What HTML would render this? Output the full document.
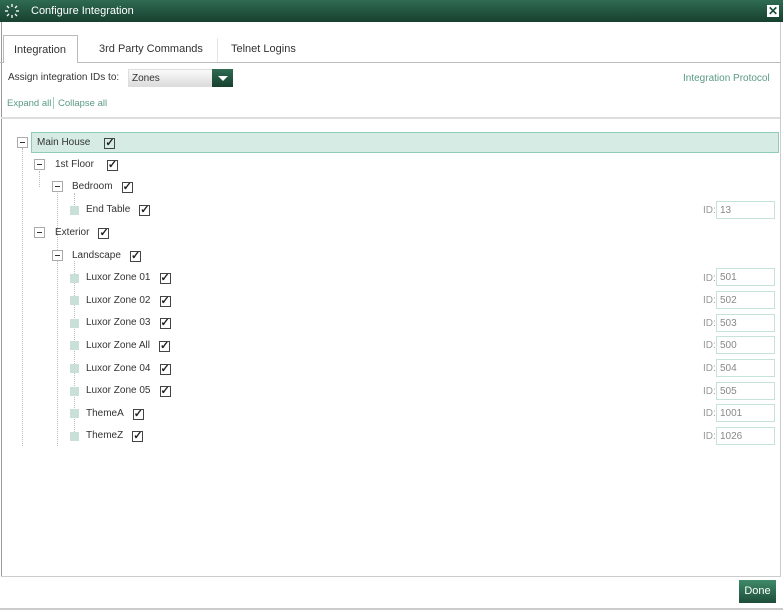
<!DOCTYPE html>
<html><head><style>
*{margin:0;padding:0;box-sizing:border-box}
body{width:783px;height:610px;background:#fff;font-family:"Liberation Sans",sans-serif;font-size:11px;color:#333;position:relative;overflow:hidden}
.a{position:absolute}
.title{left:0;top:0;width:783px;height:22px;background:linear-gradient(#2f6b52,#17402f);color:#fff;font-size:11px}
.exp{width:11px;height:11px;border:1px solid #aaa;background:#fff}
.exp:after{content:"";position:absolute;left:2px;top:4px;width:5px;height:1px;background:#333}
.leaf{width:9px;height:9px;background:#c8e0d8}
.cb{display:inline-block;vertical-align:-1px;margin-left:9px;width:11px;height:11px;border:1px solid #444;font-size:11px;line-height:9px;font-weight:bold;color:#222;text-align:center}
.lbl{font-size:10px;color:#333;white-space:nowrap}
.id{left:703px;font-size:10px;color:#999}
.in{left:716px;width:59px;height:18px;border:1px solid #c5e3d8;font-size:10px;color:#888;padding:3px 0 0 3px}
.dv{border-left:1px dotted #bbb;width:0}
</style></head><body>
<div class="a title">
<svg class="a" style="left:4px;top:3px" width="16" height="16" viewBox="0 0 16 16"><g stroke="#fff" stroke-width="1.3"><line x1="8" y1="1" x2="8" y2="4"/><line x1="8" y1="12" x2="8" y2="15"/><line x1="1" y1="8" x2="4" y2="8"/><line x1="12" y1="8" x2="15" y2="8"/><line x1="3" y1="3" x2="5" y2="5"/><line x1="11" y1="11" x2="13" y2="13"/><line x1="13" y1="3" x2="11" y2="5"/><line x1="3" y1="13" x2="5" y2="11"/></g></svg>
<span class="a" style="left:31px;top:5px">Configure Integration</span>
<div class="a" style="left:767px;top:5px;width:12px;height:12px;background:#fff;color:#1d4d3a;font-weight:bold;font-size:12px;line-height:12px;text-align:center">✕</div>
</div>
<div class="a" style="left:1px;top:22px;width:1px;height:555px;background:#999"></div>
<div class="a" style="left:780px;top:22px;width:1px;height:555px;background:#ccc"></div>
<div class="a" style="left:0;top:62px;width:781px;height:1px;background:#bbb"></div>
<div class="a" style="left:3px;top:35px;width:75px;height:28px;border:1px solid #bbb;border-bottom:none;background:#fff"></div>
<span class="a" style="left:14px;top:44px;font-size:11px">Integration</span>
<span class="a" style="left:99px;top:43px;font-size:11px">3rd Party Commands</span>
<div class="a" style="left:217px;top:38px;width:1px;height:24px;background:#e5e5e5"></div>
<span class="a" style="left:231px;top:43px;font-size:11px">Telnet Logins</span>
<span class="a" style="left:8px;top:72px;font-size:10px">Assign integration IDs to:</span>
<div class="a" style="left:128px;top:69px;width:105px;height:18px;background:linear-gradient(#fafafa,#dcdcdc);border:1px solid #ddd"></div>
<span class="a" style="left:132px;top:73px;font-size:10px">Zones</span>
<div class="a" style="left:212px;top:69px;width:21px;height:18px;background:linear-gradient(#2f6b52,#17402f)"></div>
<div class="a" style="left:218px;top:76px;width:0;height:0;border-left:5px solid transparent;border-right:5px solid transparent;border-top:5px solid #fff"></div>
<span class="a" style="left:683px;top:73px;font-size:10px;color:#5a9a82">Integration Protocol</span>
<span class="a" style="left:7px;top:98px;font-size:9.5px;color:#5a9a82">Expand all</span>
<div class="a" style="left:53px;top:97px;width:1px;height:12px;background:#9cc"></div>
<span class="a" style="left:58px;top:98px;font-size:9.5px;color:#5a9a82">Collapse all</span>
<div class="a" style="left:1px;top:117px;width:779px;height:2px;background:#ddd"></div>
<div class="a dv" style="left:22px;top:148px;height:298px"></div>
<div class="a dv" style="left:39px;top:171px;height:16px"></div>
<div class="a dv" style="left:57px;top:193px;height:253px"></div>
<div class="a dv" style="left:74px;top:193px;height:22px"></div>
<div class="a dv" style="left:74px;top:261px;height:175px"></div>
<div class="a" style="left:31px;top:132px;width:748px;height:21px;background:#d5ebe3;border:1px solid #8fcbb8"></div>
<div class="a exp" style="left:17px;top:137px"></div>
<span class="a lbl" style="left:37px;top:137px">Main House<span class="cb" style="margin-left:14px">✓</span></span>
<div class="a exp" style="left:34px;top:159px"></div>
<span class="a lbl" style="left:55px;top:159px">1st Floor<span class="cb" style="margin-left:13px">✓</span></span>
<div class="a exp" style="left:52px;top:181px"></div>
<span class="a lbl" style="left:72px;top:181px">Bedroom<span class="cb">✓</span></span>
<div class="a leaf" style="left:70px;top:206px"></div>
<span class="a lbl" style="left:86px;top:204px">End Table<span class="cb">✓</span></span>
<span class="a id" style="top:205px">ID:</span><div class="a in" style="top:201px">13</div>
<div class="a exp" style="left:34px;top:227px"></div>
<span class="a lbl" style="left:55px;top:227px">Exterior<span class="cb">✓</span></span>
<div class="a exp" style="left:52px;top:250px"></div>
<span class="a lbl" style="left:72px;top:250px">Landscape<span class="cb">✓</span></span>

<div class="a leaf" style="left:70px;top:274px"></div><span class="a lbl" style="left:86px;top:272px">Luxor Zone 01<span class="cb">✓</span></span><span class="a id" style="top:273px">ID:</span><div class="a in" style="top:268px">501</div>
<div class="a leaf" style="left:70px;top:296px"></div><span class="a lbl" style="left:86px;top:295px">Luxor Zone 02<span class="cb">✓</span></span><span class="a id" style="top:295px">ID:</span><div class="a in" style="top:291px">502</div>
<div class="a leaf" style="left:70px;top:319px"></div><span class="a lbl" style="left:86px;top:317px">Luxor Zone 03<span class="cb">✓</span></span><span class="a id" style="top:318px">ID:</span><div class="a in" style="top:314px">503</div>
<div class="a leaf" style="left:70px;top:341px"></div><span class="a lbl" style="left:86px;top:340px">Luxor Zone All<span class="cb">✓</span></span><span class="a id" style="top:340px">ID:</span><div class="a in" style="top:336px">500</div>
<div class="a leaf" style="left:70px;top:364px"></div><span class="a lbl" style="left:86px;top:363px">Luxor Zone 04<span class="cb">✓</span></span><span class="a id" style="top:363px">ID:</span><div class="a in" style="top:359px">504</div>
<div class="a leaf" style="left:70px;top:387px"></div><span class="a lbl" style="left:86px;top:385px">Luxor Zone 05<span class="cb">✓</span></span><span class="a id" style="top:386px">ID:</span><div class="a in" style="top:382px">505</div>
<div class="a leaf" style="left:70px;top:409px"></div><span class="a lbl" style="left:86px;top:408px">ThemeA<span class="cb">✓</span></span><span class="a id" style="top:408px">ID:</span><div class="a in" style="top:404px">1001</div>
<div class="a leaf" style="left:70px;top:432px"></div><span class="a lbl" style="left:86px;top:430px">ThemeZ<span class="cb">✓</span></span><span class="a id" style="top:431px">ID:</span><div class="a in" style="top:427px">1026</div>

<div class="a" style="left:1px;top:576px;width:780px;height:1px;background:#ccc"></div>
<div class="a" style="left:0;top:608px;width:783px;height:2px;background:#ccc"></div>
<div class="a" style="left:739px;top:580px;width:37px;height:23px;background:linear-gradient(#3f8a68,#1d4d3a);color:#fff;font-size:11px;text-align:center;line-height:23px">Done</div>
</body></html>
